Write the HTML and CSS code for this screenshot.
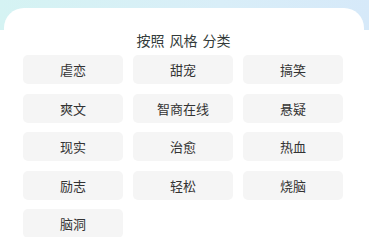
FILE: index.html
```html
<!DOCTYPE html>
<html lang="zh">
<head>
<meta charset="utf-8">
<link rel="stylesheet" href="styles.css">
</head>
<body>
<div class="page">
  <div class="card">
    <div class="title"><span>按照</span><span>风格</span><span>分类</span></div>
    <div class="grid">
      <div class="tag">虐恋</div>
      <div class="tag">甜宠</div>
      <div class="tag">搞笑</div>
      <div class="tag">爽文</div>
      <div class="tag">智商在线</div>
      <div class="tag">悬疑</div>
      <div class="tag">现实</div>
      <div class="tag">治愈</div>
      <div class="tag">热血</div>
      <div class="tag">励志</div>
      <div class="tag">轻松</div>
      <div class="tag">烧脑</div>
      <div class="tag">脑洞</div>
    </div>
  </div>
</div>
</body>
</html>
```
FILE: styles.css
```css
html, body {
  margin: 0;
  padding: 0;
  background: #ffffff;
}
body {
  width: 369px;
  height: 237px;
  overflow: hidden;
  font-family: "Noto Sans CJK SC", "Noto Sans", sans-serif;
}
.page {
  height: 237px;
  background: linear-gradient(90deg, #d5f3f3 0%, #d9eef8 60%, #d6e9f9 100%);
  background-size: 100% 30px;
  background-repeat: no-repeat;
  padding-top: 8px;
  box-sizing: border-box;
}
.card {
  margin: 0 5px 0 4px;
  height: 229px;
  background: #ffffff;
  border-radius: 20px 20px 0 0;
  padding: 22px 20px 0 19px;
  box-sizing: border-box;
}
.title {
  display: flex;
  justify-content: center;
  gap: 5px;
  font-size: 14px;
  line-height: 20px;
  color: #333b3a;
  margin-bottom: 5px;
}
.grid {
  display: grid;
  grid-template-columns: repeat(3, 100px);
  column-gap: 10px;
  row-gap: 9.5px;
}
.tag {
  height: 29px;
  background: #f5f5f5;
  border-radius: 5px;
  display: flex;
  align-items: center;
  justify-content: center;
  font-size: 13px;
  color: #333333;
}
```
